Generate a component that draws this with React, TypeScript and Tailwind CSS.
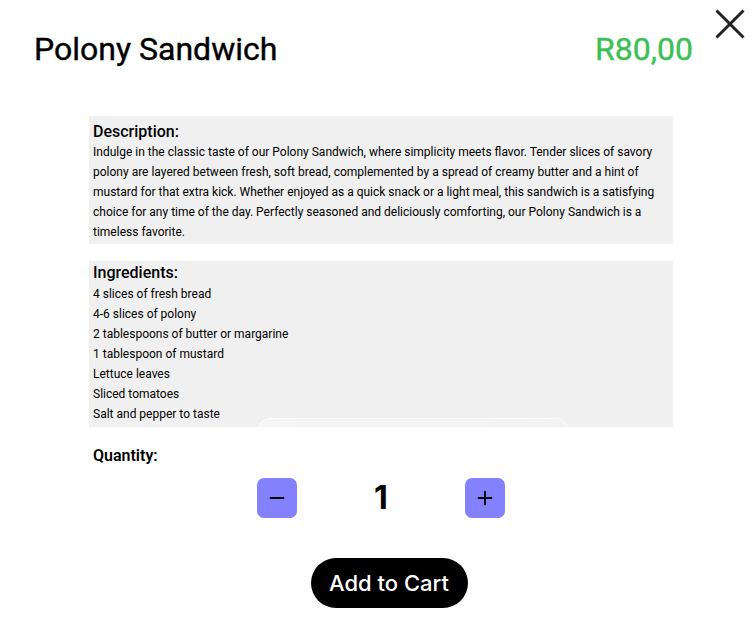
import { Minus, Plus } from "lucide-react";

const ingredients = [
  "4 slices of fresh bread",
  "4-6 slices of polony",
  "2 tablespoons of butter or margarine",
  "1 tablespoon of mustard",
  "Lettuce leaves",
  "Sliced tomatoes",
  "Salt and pepper to taste",
];

export default function App() {
  return (
    <div className="relative w-[754px] h-[635px] bg-white font-['Roboto',sans-serif] text-black overflow-hidden">
      <button className="absolute left-[715px] top-[9px] text-[#222]">
        <svg width="30" height="30" viewBox="0 0 30 30" fill="none" stroke="currentColor" strokeWidth="3">
          <path d="M1.5 1.5 L28.5 28.5 M28.5 1.5 L1.5 28.5" />
        </svg>
      </button>

      <div className="flex items-center justify-between pl-[34px] pr-[61px] pt-[30px] h-[98px] pb-[30px]">
        <h1 className="text-[32px] leading-none font-normal [-webkit-text-stroke:0.4px_black]">Polony Sandwich</h1>
        <span className="text-[32px] leading-none font-normal text-[#3dbf56] [-webkit-text-stroke:0.4px_#3dbf56]">R80,00</span>
      </div>

      <div className="ml-[89px] w-[584px] mt-[18px]">
        <div className="bg-[#f0f0f0] px-[4px] pt-[5px] pb-[2px]">
          <h2 className="text-[16px] leading-[21px] font-medium">Description:</h2>
          <p className="text-[12px] leading-[20px]">
            Indulge in the classic taste of our Polony Sandwich, where simplicity meets flavor. Tender slices of savory
            polony are layered between fresh, soft bread, complemented by a spread of creamy butter and a hint of
            mustard for that extra kick. Whether enjoyed as a quick snack or a light meal, this sandwich is a satisfying
            choice for any time of the day. Perfectly seasoned and deliciously comforting, our Polony Sandwich is a
            timeless favorite.
          </p>
        </div>

        <div className="relative mt-[17px] h-[166px] bg-[#f0f0f0] px-[4px] pt-[1px] overflow-hidden">
          <h2 className="text-[16px] leading-[22px] font-medium">Ingredients:</h2>
          <ul className="text-[12px] leading-[20px]">
            {ingredients.map((i) => (
              <li key={i}>{i}</li>
            ))}
          </ul>
          <div className="absolute left-[169px] top-[157px] w-[310px] h-[60px] rounded-[12px] border border-white/70 bg-gradient-to-r from-white/40 to-white/20" />
        </div>

        <div className="mt-[19px] px-[4px] text-[16px] leading-[20px] font-semibold">Quantity:</div>

        <div className="mt-[12px] flex items-center justify-center font-['Inter',sans-serif]">
          <button className="w-[40px] h-[40px] rounded-[7px] bg-[#8481ff] flex items-center justify-center text-black">
            <Minus size={22} strokeWidth={2} />
          </button>
          <span className="w-[168px] text-center text-[32px] font-bold leading-none">1</span>
          <button className="w-[40px] h-[40px] rounded-[7px] bg-[#8481ff] flex items-center justify-center text-black">
            <Plus size={22} strokeWidth={2} />
          </button>
        </div>

        <div className="mt-[40px] flex justify-center pl-[16px]">
          <button className="h-[50px] w-[157px] rounded-full bg-black text-white text-[22px] font-medium font-['Inter',sans-serif]">
            Add to Cart
          </button>
        </div>
      </div>
    </div>
  );
}
